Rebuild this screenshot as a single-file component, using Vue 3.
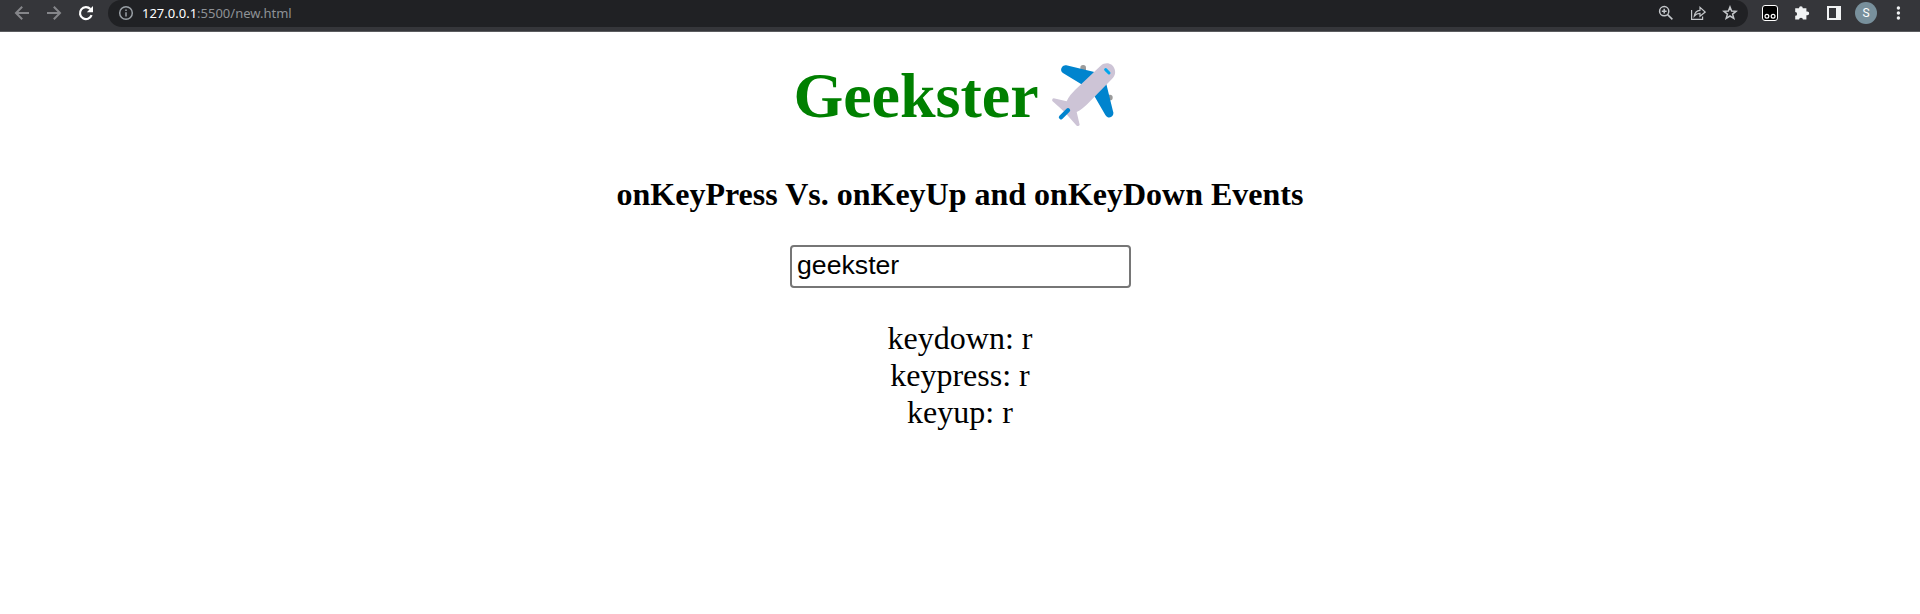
<script setup>
import { ref } from 'vue'

const text = ref('geekster')
const down = ref('r')
const press = ref('r')
const up = ref('r')
</script>

<template>
  <div class="window">
    <header class="toolbar">
      <nav class="nav">
        <svg width="16" height="16" viewBox="0 0 16 16" class="dim"><path d="M15 8H2M8.2 1.8L2 8L8.2 14.2" /></svg>
        <svg width="16" height="16" viewBox="0 0 16 16" class="dim"><path d="M1 8H14M7.8 1.8L14 8L7.8 14.2" /></svg>
        <svg width="16" height="16" viewBox="0 0 16 16" class="reload"><path d="M13.6 10.2A6 6 0 1 1 12.4 4" /><path d="M15 1V7.2H8.8Z" class="tip" /></svg>
      </nav>
      <div class="omnibox">
        <svg width="16" height="16" viewBox="0 0 16 16" class="info"><circle cx="8" cy="8" r="6.3" /><path d="M8 7.2V11.4M8 4.4V6" /></svg>
        <span class="url"><b>127.0.0.1</b>:5500/new.html</span>
        <div class="actions">
          <svg width="16" height="16" viewBox="0 0 16 16"><circle cx="6.2" cy="6.2" r="4.6" /><path d="M9.6 9.6L14.4 14.4M3.8 6.2H8.6M6.2 3.8V8.6" /></svg>
          <svg width="16" height="16" viewBox="0 0 16 16" class="thin"><path d="M1.6 5V14.4H12.6V11.6M4.3 11C4.8 7.5 6.8 5.6 10 5.3V2.4L15.2 7L10 11.2V8.4C7.4 8.4 5.8 9.2 4.3 11Z" /></svg>
          <svg width="16" height="16" viewBox="0 0 16 16"><path d="M8 2L9.6 6.1L14 6.3L10.6 9.1L11.8 13.4L8 11L4.2 13.4L5.4 9.1L2 6.3L6.4 6.1Z" /></svg>
        </div>
      </div>
      <div class="extensions">
        <svg width="16" height="16" viewBox="0 0 16 16"><rect x="0.5" y="0.5" width="15" height="15" rx="2.5" fill="#000" stroke="#fff" /><g fill="none" stroke="#fff" stroke-width="1.2"><circle cx="4.9" cy="11.3" r="1.9" /><circle cx="11.1" cy="11.3" r="1.9" /></g></svg>
        <svg width="16" height="16" viewBox="0 0 16 16"><path fill="#f1f3f4" d="M5 3.2A1.9 1.9 0 0 1 8.8 3.2H12.4V6.4H13.3A1.9 1.9 0 0 1 13.3 10.2H12.4V14.6H8.9A1.9 1.9 0 0 0 5.1 14.6H1.2V10.8A1.9 1.9 0 0 0 1.2 7V3.2Z" /></svg>
        <svg width="16" height="16" viewBox="0 0 16 16"><path fill="#f1f3f4" fill-rule="evenodd" d="M1 1H15V15H1ZM3 3V13H10V3Z" /></svg>
        <span class="avatar">S</span>
        <svg width="16" height="16" viewBox="0 0 16 16" fill="#f1f3f4"><circle cx="8.4" cy="3" r="1.7" /><circle cx="8.4" cy="8" r="1.7" /><circle cx="8.4" cy="13" r="1.7" /></svg>
      </div>
    </header>

    <main class="page">
      <h1>
        <span>Geekster</span>
        <svg class="plane" width="65" height="65" viewBox="30 20 195 195">
          <g fill="#9b9b9b"><rect x="118" y="29" width="17" height="24" rx="8" /><rect x="192" y="118" width="23" height="17" rx="8" /></g>
          <g fill="#0084ce">
            <path d="M76 30L160 50L130 92L67 54A13 13 0 0 1 76 30Z" />
            <path d="M196 86L216 168A12 12 0 0 1 193 179L157 117Z" />
          </g>
          <path fill="#cdc4d6" d="M179 31C195 18 216 24 221 42C225 55 220 63 212 72L140 145C129 156 119 164 107 170L116 208Q114 214 107 211L74 174L60 160L34 137Q32 130 38 129L77 138C83 124 93 113 102 104Z" />
          <path d="M60 186L81 165" stroke="#0084ce" stroke-width="13" stroke-linecap="round" />
          <path d="M194 43L204 53" stroke="#00a6ed" stroke-width="9" stroke-linecap="round" />
        </svg>
      </h1>
      <h3>onKeyPress Vs. onKeyUp and onKeyDown Events</h3>
      <input
        v-model="text"
        type="text"
        spellcheck="false"
        @keydown="down = $event.key"
        @keypress="press = $event.key"
        @keyup="up = $event.key"
      />
      <div class="log">
        <div>keydown: {{ down }}</div>
        <div>keypress: {{ press }}</div>
        <div>keyup: {{ up }}</div>
      </div>
    </main>
  </div>
</template>

<style>
body {
  margin: 0;
  background: #fff;
}
</style>

<style scoped>
.window {
  height: 614px;
  overflow: hidden;
  background: #fff;
}
svg {
  display: block;
  flex: none;
}
.toolbar {
  box-sizing: border-box;
  height: 32px;
  display: flex;
  align-items: flex-start;
  background: #35363a;
  border-bottom: 1px solid #5b5c5f;
}
.nav {
  display: flex;
  gap: 16px;
  padding: 5px 0 0 14px;
  width: 94px;
}
.nav svg {
  fill: none;
  stroke-width: 2;
}
.nav .dim {
  stroke: #85868a;
}
.nav .reload {
  stroke: #fff;
  stroke-width: 2.2;
}
.nav .reload .tip {
  fill: #fff;
  stroke: none;
}
.omnibox {
  box-sizing: border-box;
  width: 1640px;
  height: 27px;
  display: flex;
  align-items: center;
  padding: 0 10px 1px;
  background: #202124;
  border-radius: 13px 13px 14px 14px;
}
.info {
  fill: none;
  stroke: #9aa0a6;
  stroke-width: 1.5;
}
.url {
  margin-left: 8px;
  font: 13px/18px "Noto Sans", sans-serif;
  color: #8e9196;
  white-space: nowrap;
}
.url b {
  font-weight: 400;
  color: #fff;
}
.actions {
  display: flex;
  gap: 16px;
  margin-left: auto;
}
.actions svg {
  fill: none;
  stroke: #c4c7ca;
  stroke-width: 1.5;
}
.actions .thin {
  stroke-width: 1.2;
}
.extensions {
  display: flex;
  align-items: center;
  gap: 16px;
  height: 26px;
  margin-left: 14px;
}
.avatar {
  width: 22px;
  height: 22px;
  margin: 0 -3px;
  border-radius: 50%;
  background: #78909c;
  color: #fff;
  font: 12px/22px Roboto, sans-serif;
  text-align: center;
}
.page {
  display: flex;
  flex-direction: column;
  align-items: center;
  font-family: "Liberation Serif", serif;
  font-size: 32px;
  line-height: 37px;
  color: #000;
}
h1 {
  display: flex;
  align-items: flex-start;
  gap: 12px;
  margin: 27px 11px 0 0;
  height: 74px;
  font-size: 64px;
  line-height: 74px;
  color: #008000;
}
.plane {
  margin-top: 3px;
}
h3 {
  margin: 43px 0 0;
  font-size: 32px;
  line-height: 37px;
  white-space: nowrap;
}
input {
  box-sizing: border-box;
  width: 341px;
  height: 43px;
  margin: 32px 0 0 1px;
  padding: 1px 5px 3px;
  border: 2px solid #767676;
  border-radius: 4px;
  background: #fff;
  color: #000;
  font: 26.67px "Liberation Sans", Arial, sans-serif;
  outline: none;
}
.log {
  margin-top: 32px;
  text-align: center;
}
</style>
